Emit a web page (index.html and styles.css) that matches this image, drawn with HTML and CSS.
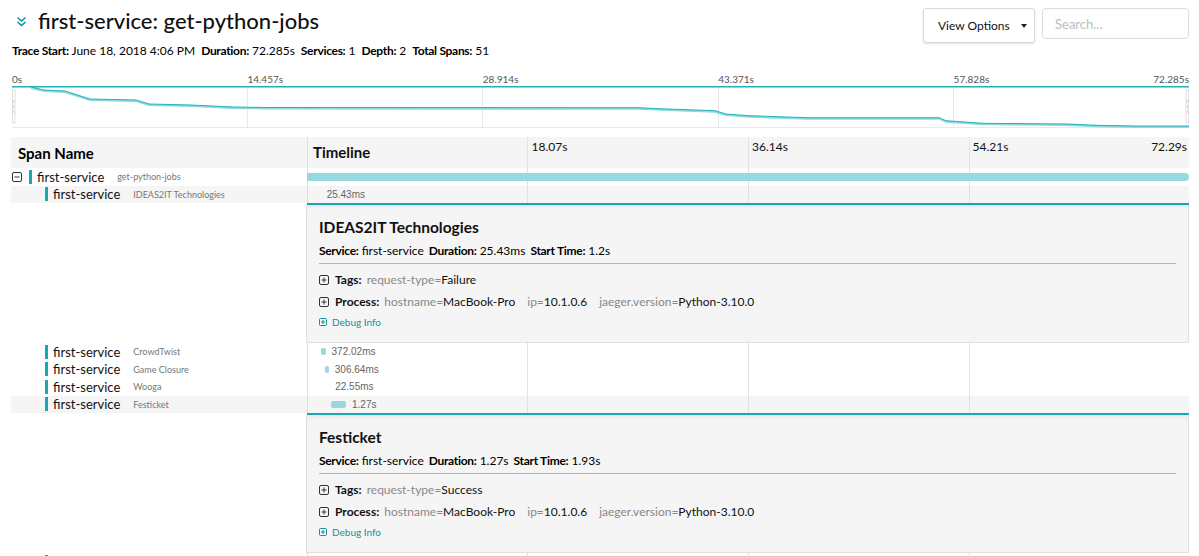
FILE: index.html
```html
<!DOCTYPE html>
<html lang="en">
<head>
<meta charset="utf-8">
<title>first-service: get-python-jobs</title>
<link rel="stylesheet" href="styles.css">
</head>
<body>
<div class="page">
  <header class="trace-header">
    <div class="header-left">
      <h1 class="title">
        <svg class="chev" width="11" height="11" viewBox="0 0 11 11"><path d="M1.5 1.5 L5.5 5 L9.5 1.5 M1.5 6 L5.5 9.5 L9.5 6" fill="none" stroke="#11939a" stroke-width="1.6"/></svg>
        <span>first-service: get-python-jobs</span>
      </h1>
      <div class="meta">
        <span><b>Trace Start:</b> June 18, 2018 4:06 PM</span>
        <span><b>Duration:</b> 72.285s</span>
        <span><b>Services:</b> 1</span>
        <span><b>Depth:</b> 2</span>
        <span><b>Total Spans:</b> 51</span>
      </div>
    </div>
    <div class="header-right">
      <button class="view-btn" type="button">View Options <span class="caret"></span></button>
      <input class="search" type="text" placeholder="Search...">
    </div>
  </header>

  <section class="minimap">
    <div class="mm-labels">
      <span>0s</span>
      <span>14.457s</span>
      <span>28.914s</span>
      <span>43.371s</span>
      <span class="last"><span>57.828s</span><span>72.285s</span></span>
    </div>
    <svg class="mm-canvas" width="1177" height="42" viewBox="0 0 1177 42">
      <g stroke="#e8e8e8" stroke-width="1">
        <line x1="235.5" y1="0" x2="235.5" y2="42"/>
        <line x1="470.5" y1="0" x2="470.5" y2="42"/>
        <line x1="706.5" y1="0" x2="706.5" y2="42"/>
        <line x1="941.5" y1="0" x2="941.5" y2="42"/>
        <line x1="0" y1="41.5" x2="1177" y2="41.5"/>
      </g>
      <line x1="0" y1="0.75" x2="1177" y2="0.75" stroke="#1fb0b8" stroke-width="1.5"/>
      <path d="M19,2 L32,5 L53,6 L78,14 L124,15 L137,19 L179,20 L221,22 L252,22.5 L626,22.7 L655,24 L703,25.7 L714,29 L737,30.7 L796,32.7 L927,32.7 L934,35.7 L971,38.3 L1055,39 L1085,40.3 L1124,41 L1177,41" fill="none" stroke="#8fd8de" stroke-width="2"/>
      <path d="M19,1 L32,4 L53,5 L78,13 L124,14 L137,18 L179,19 L221,21 L252,21.5 L626,21.7 L655,23 L703,24.7 L714,28 L737,29.7 L796,31.7 L927,31.7 L934,34.7 L971,37.3 L1055,38 L1085,39.3 L1124,40 L1177,40" fill="none" stroke="#22b2ba" stroke-width="1"/>
      <g fill="#fff" stroke="#d6d6d6" stroke-width="0.8">
        <rect x="0.4" y="4" width="2.6" height="33"/>
        <rect x="1174" y="4" width="2.6" height="33"/>
      </g>
      <g stroke="#c8c8c8" stroke-width="0.8">
        <line x1="1.7" y1="14" x2="1.7" y2="17"/>
        <line x1="1.7" y1="19" x2="1.7" y2="22"/>
        <line x1="1.7" y1="24" x2="1.7" y2="27"/>
        <line x1="1175.3" y1="14" x2="1175.3" y2="17"/>
        <line x1="1175.3" y1="19" x2="1175.3" y2="22"/>
        <line x1="1175.3" y1="24" x2="1175.3" y2="27"/>
      </g>
    </svg>
  </section>

  <section class="spans">
    <div class="row head">
      <div class="name-cell head-name">Span Name</div>
      <div class="tl-cell head-tl">
        <div class="tick"><span class="tl-title">Timeline</span></div>
        <div class="tick"><span>18.07s</span></div>
        <div class="tick"><span>36.14s</span></div>
        <div class="tick last"><span>54.21s</span><span>72.29s</span></div>
      </div>
    </div>

    <div class="row">
      <div class="name-cell">
        <span class="toggle"><svg width="10" height="10" viewBox="0 0 10 10"><rect x="0.5" y="0.5" width="9" height="9" rx="1.5" fill="none" stroke="#333" stroke-width="1"/><line x1="2.5" y1="5" x2="7.5" y2="5" stroke="#333" stroke-width="1"/></svg></span>
        <span class="svc-bar"></span><span class="svc">first-service</span><span class="op">get-python-jobs</span>
      </div>
      <div class="tl-cell"><span class="span-bar root" style="margin-left:0%;width:100%"></span></div>
    </div>

    <div class="row sel">
      <div class="name-cell">
        <span class="indent"></span><span class="toggle"></span>
        <span class="svc-bar"></span><span class="svc">first-service</span><span class="op">IDEAS2IT Technologies</span>
      </div>
      <div class="tl-cell"><span class="span-bar" style="margin-left:1.66%;width:0%"></span><span class="dur far">25.43ms</span></div>
    </div>

    <div class="row detail">
      <div class="name-cell"></div>
      <div class="detail-cell">
        <div class="panel">
          <h2 class="panel-title">IDEAS2IT Technologies</h2>
          <div class="overview"><span><b>Service:</b> first-service</span><span><b>Duration:</b> 25.43ms</span><span><b>Start Time:</b> 1.2s</span></div>
          <div class="divider"></div>
          <div class="kv">
            <svg class="plus" width="10" height="10" viewBox="0 0 10 10"><rect x="0.5" y="0.5" width="9" height="9" rx="1.5" fill="none" stroke="#333"/><path d="M2.5 5 H7.5 M5 2.5 V7.5" stroke="#333"/></svg>
            <b>Tags:</b><span class="pair"><span class="k">request-type=</span>Failure</span>
          </div>
          <div class="kv">
            <svg class="plus" width="10" height="10" viewBox="0 0 10 10"><rect x="0.5" y="0.5" width="9" height="9" rx="1.5" fill="none" stroke="#333"/><path d="M2.5 5 H7.5 M5 2.5 V7.5" stroke="#333"/></svg>
            <b>Process:</b><span class="pair"><span class="k">hostname=</span>MacBook-Pro</span><span class="pair"><span class="k">ip=</span>10.1.0.6</span><span class="pair"><span class="k">jaeger.version=</span>Python-3.10.0</span>
          </div>
          <div class="debug">
            <svg width="8" height="8" viewBox="0 0 8 8"><rect x="0.5" y="0.5" width="7" height="7" rx="1" fill="none" stroke="#11939a"/><path d="M2 4 H6 M4 2 V6" stroke="#11939a"/></svg>
            <span>Debug Info</span>
          </div>
        </div>
      </div>
    </div>

    <div class="row">
      <div class="name-cell">
        <span class="indent"></span><span class="toggle"></span>
        <span class="svc-bar"></span><span class="svc">first-service</span><span class="op">CrowdTwist</span>
      </div>
      <div class="tl-cell"><span class="span-bar" style="margin-left:1.59%;width:0.515%"></span><span class="dur">372.02ms</span></div>
    </div>

    <div class="row">
      <div class="name-cell">
        <span class="indent"></span><span class="toggle"></span>
        <span class="svc-bar"></span><span class="svc">first-service</span><span class="op">Game Closure</span>
      </div>
      <div class="tl-cell"><span class="span-bar" style="margin-left:2.05%;width:0.424%"></span><span class="dur">306.64ms</span></div>
    </div>

    <div class="row">
      <div class="name-cell">
        <span class="indent"></span><span class="toggle"></span>
        <span class="svc-bar"></span><span class="svc">first-service</span><span class="op">Wooga</span>
      </div>
      <div class="tl-cell"><span class="span-bar" style="margin-left:2.63%;width:0%"></span><span class="dur far">22.55ms</span></div>
    </div>

    <div class="row sel">
      <div class="name-cell">
        <span class="indent"></span><span class="toggle"></span>
        <span class="svc-bar"></span><span class="svc">first-service</span><span class="op">Festicket</span>
      </div>
      <div class="tl-cell"><span class="span-bar" style="margin-left:2.67%;width:1.757%"></span><span class="dur">1.27s</span></div>
    </div>

    <div class="row detail">
      <div class="name-cell"></div>
      <div class="detail-cell">
        <div class="panel">
          <h2 class="panel-title">Festicket</h2>
          <div class="overview"><span><b>Service:</b> first-service</span><span><b>Duration:</b> 1.27s</span><span><b>Start Time:</b> 1.93s</span></div>
          <div class="divider"></div>
          <div class="kv">
            <svg class="plus" width="10" height="10" viewBox="0 0 10 10"><rect x="0.5" y="0.5" width="9" height="9" rx="1.5" fill="none" stroke="#333"/><path d="M2.5 5 H7.5 M5 2.5 V7.5" stroke="#333"/></svg>
            <b>Tags:</b><span class="pair"><span class="k">request-type=</span>Success</span>
          </div>
          <div class="kv">
            <svg class="plus" width="10" height="10" viewBox="0 0 10 10"><rect x="0.5" y="0.5" width="9" height="9" rx="1.5" fill="none" stroke="#333"/><path d="M2.5 5 H7.5 M5 2.5 V7.5" stroke="#333"/></svg>
            <b>Process:</b><span class="pair"><span class="k">hostname=</span>MacBook-Pro</span><span class="pair"><span class="k">ip=</span>10.1.0.6</span><span class="pair"><span class="k">jaeger.version=</span>Python-3.10.0</span>
          </div>
          <div class="debug">
            <svg width="8" height="8" viewBox="0 0 8 8"><rect x="0.5" y="0.5" width="7" height="7" rx="1" fill="none" stroke="#11939a"/><path d="M2 4 H6 M4 2 V6" stroke="#11939a"/></svg>
            <span>Debug Info</span>
          </div>
        </div>
      </div>
    </div>

    <div class="row">
      <div class="name-cell">
        <span class="indent"></span><span class="toggle"></span>
        <span class="svc-bar"></span>
      </div>
      <div class="tl-cell"></div>
    </div>
  </section>
</div>
</body>
</html>
```

FILE: styles.css
```css
* { box-sizing: border-box; }

html, body {
  margin: 0;
  height: 100%;
  overflow: hidden;
  background: #fff;
}

body {
  font-family: Lato, "Noto Sans", "Liberation Sans", sans-serif;
  color: #000;
}

/* ---------- header ---------- */
.trace-header {
  display: flex;
  justify-content: space-between;
  align-items: flex-start;
  padding: 8px 10px 0 12px;
  height: 73px;
}

.title {
  display: flex;
  align-items: center;
  gap: 11px;
  margin: 0 0 0 4px;
  font-size: 22px;
  font-weight: 500;
  line-height: 26px;
  color: #111;
}

.chev { flex: none; }

.meta {
  margin-top: 9px;
  display: flex;
  gap: 6px;
  font-size: 12px;
  line-height: 16px;
  color: #000;
}

.meta b {
  font-weight: 700;
  letter-spacing: -0.3px;
}

.header-right {
  display: flex;
  align-items: flex-start;
  gap: 7px;
}

.view-btn {
  height: 35px;
  width: 112px;
  padding: 0 0 0 14px;
  display: flex;
  align-items: center;
  gap: 11px;
  background: #fff;
  border: 1px solid #d9d9d9;
  border-radius: 3px;
  box-shadow: 0 1px 2px rgba(0, 0, 0, 0.12);
  font-family: Lato, "Liberation Sans", sans-serif;
  font-size: 12px;
  color: #111;
}

.caret {
  width: 0;
  height: 0;
  border-left: 3.5px solid transparent;
  border-right: 3.5px solid transparent;
  border-top: 4px solid #222;
}

.search {
  width: 147px;
  height: 31px;
  border: 1px solid #dcdcdc;
  border-radius: 4px;
  padding: 0 12px;
  font-family: Lato, "Liberation Sans", sans-serif;
  font-size: 13px;
  outline: none;
}

.search::placeholder { color: #bdbdbd; }

/* ---------- minimap ---------- */
.minimap {
  margin: 0 10px 0 12px;
}

.mm-labels {
  display: grid;
  grid-template-columns: repeat(5, 1fr);
  height: 13px;
  font-size: 10px;
  line-height: 12px;
  color: #555;
}

.mm-labels .last {
  display: flex;
  justify-content: space-between;
}

.mm-canvas {
  display: block;
}

/* ---------- span table ---------- */
.spans {
  margin: 9px 10px 0 11px;
}

.row {
  display: grid;
  grid-template-columns: 296px 882px;
  height: 17.5px;
}

.name-cell {
  display: flex;
  align-items: center;
  padding-left: 1px;
  overflow: hidden;
  white-space: nowrap;
}

.tl-cell {
  display: flex;
  align-items: center;
  background-image: linear-gradient(90deg,
    #dedede 0 1px, transparent 1px 220px,
    #e2e2e2 220px 221px, transparent 221px 441px,
    #e2e2e2 441px 442px, transparent 442px 662px,
    #e2e2e2 662px 663px, transparent 663px);
}

.row.sel .name-cell,
.row.sel .tl-cell { background-color: #f5f5f5; }

.head { height: 31px; }

.head-name {
  background: #f5f5f5;
  padding-left: 7px;
  font-size: 15px;
  font-weight: 700;
}

.head-tl {
  display: grid;
  grid-template-columns: repeat(4, 1fr);
  align-items: stretch;
  background-color: #f5f5f5;
}

.tick {
  padding: 2px 4px 0;
  font-size: 12px;
  line-height: 15px;
  color: #111;
}

.tick .tl-title {
  display: block;
  padding: 6px 0 0 2px;
  font-size: 15px;
  font-weight: 700;
}

.tick.last {
  display: flex;
  justify-content: space-between;
  padding-right: 2px;
}

.indent { width: 16px; flex: none; }

.toggle {
  width: 17px;
  flex: none;
  display: flex;
  align-items: center;
}

.svc-bar {
  width: 3px;
  height: 14px;
  background: #17a9b2;
  margin-right: 5px;
  flex: none;
}

.svc {
  font-size: 13px;
  color: #111;
}

.op {
  margin-left: 13px;
  font-size: 9px;
  color: #777;
}

.span-bar {
  display: block;
  height: 7px;
  border-radius: 2px;
  background: #97d9df;
  flex: none;
}

.span-bar.root {
  height: 8px;
  border-radius: 0 4px 4px 0;
}

.dur {
  margin-left: 6px;
  font-family: "Liberation Sans", Arial, sans-serif;
  font-size: 10px;
  color: #666;
}

.dur.far { margin-left: 5px; }

/* ---------- detail rows ---------- */
.row.detail { height: auto; }

.detail-cell {
  border-top: 2px solid #16a7b0;
}

.panel {
  background: #f5f5f5;
  border: 1px solid #e0e0e0;
  border-top: none;
  box-shadow: inset 0 3px 4px -2px rgba(0, 0, 0, 0.08);
  margin-left: -1px;
  padding: 12px 12px 13px 12px;
}

.panel-title {
  margin: 0;
  font-size: 15.5px;
  font-weight: 700;
  line-height: 20px;
  color: #111;
}

.overview {
  margin-top: 6px;
  display: flex;
  gap: 5px;
  font-size: 12px;
  line-height: 16px;
}

.overview b { letter-spacing: -0.3px; }

.divider {
  margin-top: 4px;
  border-top: 1px solid #b8b8b8;
}

.kv {
  display: flex;
  align-items: center;
  margin-top: 8px;
  font-size: 12px;
  line-height: 16px;
  color: #111;
}

.kv + .kv { margin-top: 6px; }

.kv .plus { margin-right: 6px; flex: none; }

.kv b { margin-right: 5px; }

.pair { margin-right: 12px; }

.k { color: #888; }

.debug {
  display: flex;
  align-items: center;
  gap: 5px;
  margin-top: 5px;
  font-size: 10px;
  line-height: 14px;
  color: #11939a;
}
```
